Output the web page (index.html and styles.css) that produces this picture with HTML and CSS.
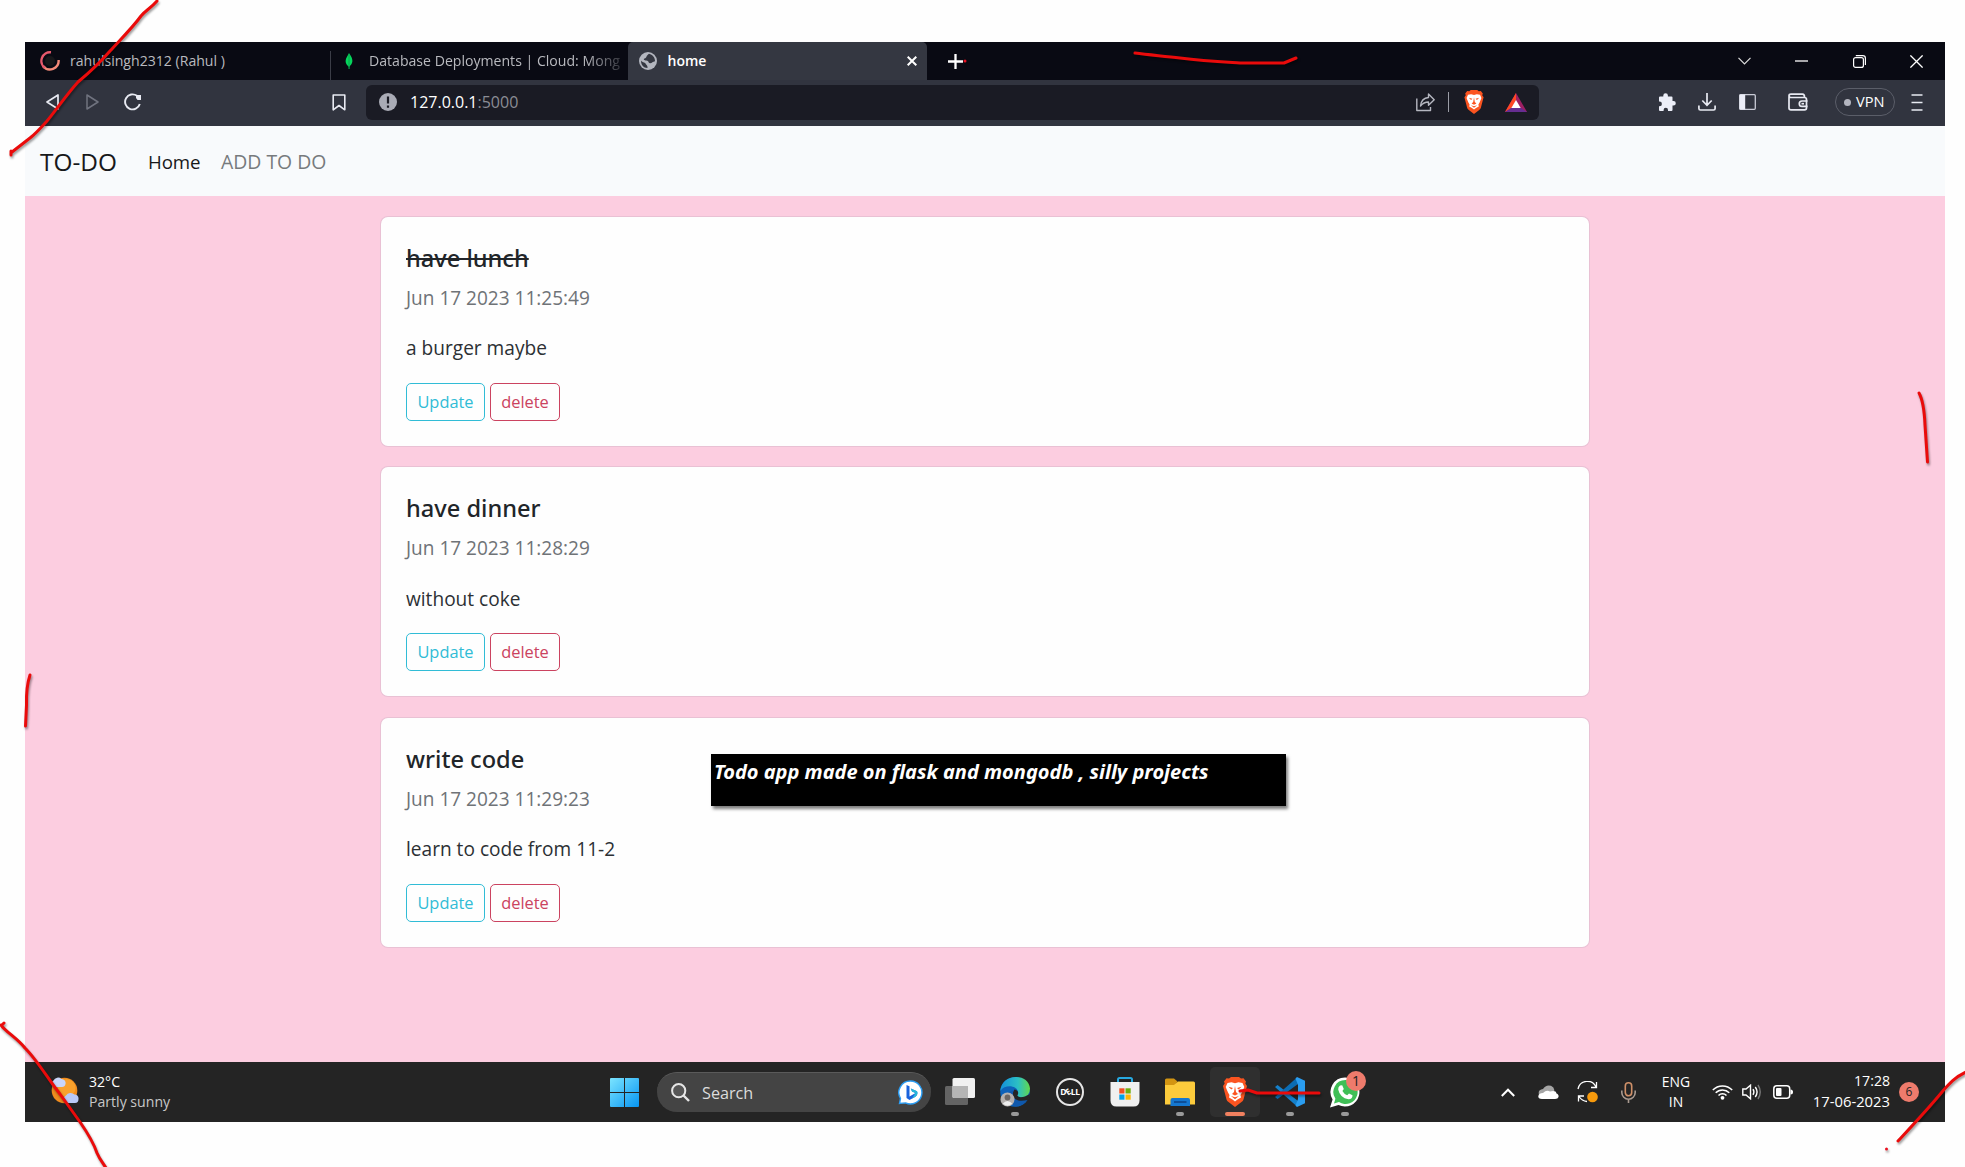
FILE: index.html
```
<!DOCTYPE html>
<html lang="en">
<head>
<meta charset="utf-8">
<title>home</title>
<link rel="stylesheet" href="styles.css">
</head>
<body>
<div class="desktop">
  <header class="tabs">
    <div class="tab tab-first">
      <svg width="20" height="20" viewBox="0 0 20 20" fill="none" stroke-width="2.4"><path d="M18.6 9A8.7 8.7 0 0 1 3 15" stroke="#f58a78"/><path d="M5 17A8.7 8.7 0 0 1 11 1.3" stroke="#e8596c"/><circle cx="10" cy="10" r="5" fill="#17171a"/></svg>
      <span>rahulsingh2312 (Rahul )</span>
    </div>
    <div class="tab tab-second">
      <svg width="8" height="16" viewBox="0 0 8 16"><path d="M4 0C5 2 7.6 4.5 7.4 8.3C7.2 11 5.5 12.5 4.5 13.5V16H3.6V13.5C2 12.5.6 10.5.6 8C.6 4.5 3.2 2.5 4 0Z" fill="#05d65c"/><path d="M4 1V14" stroke="#0a9a4a" stroke-width=".8"/></svg>
      <span class="faded">Database Deployments | Cloud: Mong</span>
    </div>
    <div class="tab tab-active">
      <svg width="18" height="18" viewBox="0 0 18 18"><circle cx="9" cy="9" r="9" fill="#b3b6bf"/><path d="M10 1.8C7 3.5 8 6 5.5 6.5C4 7 5 8.5 7.5 8.6C10 8.8 9 11 11 11.2C13 11.4 13.5 9.5 16 9.2C16.3 6 13.5 2.5 10 1.8ZM2 8.5C3 10.5 5.8 10 6.5 11.5C7 13 8.8 13 8.5 16C4.5 16 1.8 12.5 2 8.5Z" fill="#353842"/></svg>
      <b>home</b>
      <svg class="close" width="10" height="10" viewBox="0 0 10 10" stroke="#fff" stroke-width="2"><path d="M.7.7 9.3 9.3M9.3.7.7 9.3"/></svg>
    </div>
    <svg class="plus" width="15" height="15" viewBox="0 0 15 15" stroke="#fff" stroke-width="2.3"><path d="M7.500 0V15M0 7.500H15"/></svg>
    <div class="window-controls">
      <svg width="13" height="8" viewBox="0 0 13 8" fill="none" stroke="#ddd" stroke-width="1.2"><path d="M.5.8 6.500 7 12.500.8"/></svg>
      <svg width="13" height="2" viewBox="0 0 13 2"><path d="M0 1H13" stroke="#fff" stroke-width="1.3"/></svg>
      <svg width="13" height="13" viewBox="0 0 13 13" fill="none" stroke="#fff" stroke-width="1.2"><rect x=".6" y="2.6" width="9.8" height="9.8" rx="2"/><path d="M2.800.6H9.800Q12.400.6 12.400 3.200V10"/></svg>
      <svg width="13" height="13" viewBox="0 0 13 13" stroke="#fff" stroke-width="1.3"><path d="M.4.4 12.600 12.600M12.600.4.4 12.600"/></svg>
    </div>
  </header>

  <div class="toolbar">
    <svg class="back" width="13" height="16" viewBox="0 0 13 16" fill="none" stroke="#e8eaf2" stroke-width="1.7" stroke-linejoin="round"><path d="M12 1V15L1 8Z"/></svg>
    <svg class="forward" width="13" height="16" viewBox="0 0 13 16" fill="none" stroke="#70737f" stroke-width="1.5" stroke-linejoin="round"><path d="M1 1V15L12 8Z"/></svg>
    <svg class="reload" width="18" height="18" viewBox="0 0 18 18" fill="none" stroke="#e8eaf2" stroke-width="1.9"><path d="M15.800 11A7.500 7.500 0 1 1 13 2.800"/><path d="M12 2H17V7H13.500L12 5Z" fill="#e8eaf2" stroke="none"/></svg>
    <svg class="bookmark" width="14" height="17" viewBox="0 0 14 17" fill="none" stroke="#e8eaf2" stroke-width="1.6" stroke-linejoin="round"><path d="M1.200 1H12.800V15.800L7 11.500 1.200 15.800Z"/></svg>
    <div class="address">
      <svg width="18" height="18" viewBox="0 0 18 18"><circle cx="9" cy="9" r="9" fill="#a9abb5"/><path d="M9 3.500V10.500M9 12.500V14.700" stroke="#1a1b24" stroke-width="2.2"/></svg>
      <span class="url">127.0.0.1<i>:5000</i></span>
      <svg class="share" width="19" height="19" viewBox="0 0 19 19" fill="none" stroke="#b5b7c0" stroke-width="1.4" stroke-linejoin="round"><path d="M.8 5.500V17.500H14.500V14"/><path d="M12.500 1 18.200 6.700 12.500 12.200V9C9 9 6.500 10.500 4.500 13C5 8.500 7.500 4.800 12.500 4.500Z"/></svg>
      <span class="divider"></span>
      <svg class="shield" width="20" height="24" viewBox="0 0 24 30"><use href="#lion"/></svg>
      <svg class="rewards" width="22" height="19" viewBox="0 0 22 19"><path d="M11 0 22 19H0Z" fill="#9e1f63"/><path d="M11 0 0 19 7 14.500 11 7Z" fill="#ff4724"/><path d="M0 19H22L15.500 14.500H7Z" fill="#662d91"/><path d="M11 7 15.700 15H6.300Z" fill="#fff"/></svg>
    </div>
    <svg class="puzzle" width="18" height="18" viewBox="0 0 18 18"><path d="M1 4.500Q1 3.500 2 3.500H5.300V2.500A2.300 2.300 0 0 1 9.900 2.500V3.500H13.500Q14.500 3.500 14.500 4.500V8H15.500A2.300 2.300 0 0 1 15.500 12.600H14.500V17Q14.500 18 13.500 18H10V17A2.200 2.200 0 0 0 5.600 17V18H2Q1 18 1 17V13.200H1.600A2.300 2.300 0 0 0 1.600 8.600H1Z" fill="#eceef8"/></svg>
    <svg class="download" width="18" height="18" viewBox="0 0 18 18" fill="none" stroke="#e8eaf2" stroke-width="1.7"><path d="M9 0V12M4.300 7.500 9 12.300 13.700 7.500M.9 12.500V15.500Q.9 17 2.400 17H15.600Q17.100 17 17.100 15.500V12.500"/></svg>
    <svg class="sidebar" width="17" height="16" viewBox="0 0 17 16"><rect x=".7" y=".7" width="15.6" height="14.6" rx="1" fill="none" stroke="#c9cbd6" stroke-width="1.3"/><path d="M.5.500H6.200V15.500H.5Z" fill="#eceef8"/></svg>
    <svg class="wallet" width="20" height="18" viewBox="0 0 20 18" fill="none" stroke="#e8eaf2" stroke-width="1.7"><path d="M1 3.500V15Q1 16.900 3 16.900H16.500Q18.500 16.900 18.500 15V6.500Q18.500 4.500 16.500 4.500H3Q1 4.500 1 2.700Q1 1.100 3 1.100H14.500Q16.500 1.100 16.500 4"/><path d="M19.500 8H14A2.700 2.700 0 0 0 14 13.400H19.500"/><path d="M13.500 10.700H16"/></svg>
    <div class="vpn"><i></i><span>VPN</span></div>
    <svg class="menu" width="12" height="17" viewBox="0 0 12 17" stroke="#e8eaf2" stroke-width="1.7"><path d="M.5 1H11.500M.5 8.500H11.500M.5 16H11.500"/></svg>
  </div>

  <nav class="navbar">
    <span class="brand">TO-DO</span>
    <span class="nav-home">Home</span>
    <span class="nav-add">ADD TO DO</span>
  </nav>

  <main class="page">
    <article class="card">
      <h5 class="done">have lunch</h5>
      <h6>Jun 17 2023 11:25:49</h6>
      <p>a burger maybe</p>
      <div class="actions"><a class="btn update">Update</a><a class="btn delete">delete</a></div>
    </article>
    <article class="card">
      <h5>have dinner</h5>
      <h6>Jun 17 2023 11:28:29</h6>
      <p>without coke</p>
      <div class="actions"><a class="btn update">Update</a><a class="btn delete">delete</a></div>
    </article>
    <article class="card">
      <h5>write code</h5>
      <h6>Jun 17 2023 11:29:23</h6>
      <p>learn to code from 11-2</p>
      <div class="actions"><a class="btn update">Update</a><a class="btn delete">delete</a></div>
    </article>
  </main>

  <footer class="taskbar">
    <div class="weather">
      <svg width="28" height="28" viewBox="0 0 28 28"><circle cx="13.5" cy="14.5" r="12.8" fill="#f08c1e"/><circle cx="15.5" cy="12" r="9" fill="#f9a12c"/><path d="M3 11A3.500 3.500 0 0 1 2.500 4.500A5 5 0 0 1 10.500 3A4 4 0 0 1 14.500 8Q14 11 11 11Z" fill="#c9d6fa"/><path d="M15.500 27A4 4 0 0 1 15 19.500A5.500 5.500 0 0 1 23.500 18.500A4 4 0 0 1 27.500 23Q27.500 27 24 27Z" fill="#b9c9f8"/></svg>
      <div><b>32°C</b><span>Partly sunny</span></div>
    </div>
    <svg class="start" width="29" height="29" viewBox="0 0 29 29"><defs><linearGradient id="win" x1="0" y1="0" x2="1" y2="1"><stop offset="0" stop-color="#7be4ff"/><stop offset="1" stop-color="#0795f2"/></linearGradient></defs><path d="M1 0H14V14H0V1Q0 0 1 0ZM15 0H28Q29 0 29 1V14H15ZM0 15H14V29H1Q0 29 0 28ZM15 15H29V28Q29 29 28 29H15Z" fill="url(#win)"/></svg>
    <div class="search">
      <svg width="19" height="19" viewBox="0 0 19 19" fill="none" stroke="#e6e6e6" stroke-width="2"><circle cx="7.7" cy="7.7" r="6.6" fill="#565656"/><path d="M12.500 12.500 18 18" stroke-width="2.4"/></svg>
      <span>Search</span>
      <svg class="bing" width="25" height="25" viewBox="0 0 25 25"><path d="M12.500 1A11.500 11.500 0 1 1 7.500 22.900L1.500 23.500 2.500 18.500A11.500 11.500 0 0 1 12.500 1Z" fill="#fff" stroke="#2a9df4" stroke-width="1.4"/><path d="M8.500 5 11.500 6.200V16.500L17.500 13 14 11.500 12.800 8.500 19 11.200Q20.500 14.500 17 17L11.500 20 8.500 18Z" fill="#1a63dc"/><path d="M12.800 8.500 19 11.200Q20.500 14.500 17 17L14 18.500 17.500 13 14 11.500Z" fill="#26b9d8"/></svg>
    </div>
    <div class="apps">
      <div class="app"><svg width="30" height="28" viewBox="0 0 30 28"><rect y="8" width="23" height="19" rx="1.5" fill="#646464"/><rect x="7.5" width="22.5" height="20" rx="1.5" fill="#f1f1f1"/><path d="M7.500 8H23V20H9Q7.500 20 7.500 18.500Z" fill="#b5b5b5"/></svg></div>
      <div class="app open"><svg width="30" height="30" viewBox="0 0 30 30"><defs><linearGradient id="edge" x1="0" x2="1"><stop offset=".1" stop-color="#1797d8"/><stop offset=".6" stop-color="#2cc0c4"/><stop offset="1" stop-color="#62d84c"/></linearGradient></defs><circle cx="15" cy="15" r="14.8" fill="#0d62ba"/><path d="M.2 14C2-4.500 29-4 30 11.500Q30 20 21 20.500C16 20.500 16.500 18 18 16C19 9.500 6 6 .2 14Z" fill="url(#edge)"/><path d="M14.500 12.500C11 17 13 24.500 21 25.500Q25 25.700 28.500 23L30 17 25 19.500Q19 21.500 17.300 18.500 19 16 17.500 14 16 12.300 14.500 12.500Z" fill="#252525"/><path d="M14 13C10 18 14 26.500 27.500 23C22 31.500 9 31 6 21Q7 14 14 13Z" fill="#0f58ac"/><circle cx="7.5" cy="22.5" r="7" fill="#b5b1af"/><circle cx="7.5" cy="20.5" r="2.9" fill="#6b6664"/><path d="M2.800 26.500Q7.500 21.500 12.200 26.500 7.500 31 2.800 26.500Z" fill="#eee"/></svg></div>
      <div class="app dell"><span>D<i>E</i>LL</span></div>
      <div class="app"><svg width="30" height="30" viewBox="0 0 30 30"><path d="M8 8V2.500Q8 1 9.500 1H20.500Q22 1 22 2.500V8" fill="none" stroke="#27a9e1" stroke-width="2"/><path d="M.5 5H29.500V23.500Q29.500 29.500 23.500 29.500H6.500Q.5 29.500.5 23.500Z" fill="#f0f0f0"/><path d="M9.300 11.300H14.500V16.500H9.300Z" fill="#f25022"/><path d="M15.500 11.300H20.700V16.500H15.500Z" fill="#6fae0c"/><path d="M9.300 17.500H14.500V22.700H9.300Z" fill="#00a0e8"/><path d="M15.500 17.500H20.700V22.700H15.500Z" fill="#fbb507"/></svg></div>
      <div class="app open"><svg width="30" height="28" viewBox="0 0 30 28"><path d="M0 2Q0 .5 1.500.5H9L12.500 3.500 10 7H0Z" fill="#d39512"/><path d="M0 7H9L13 3.500H28.500Q30 3.500 30 5V26.500H0Z" fill="#fccb3c"/><path d="M5.500 28V22Q5.500 20 7.500 20H23Q25 20 25 22V28Z" fill="#1577cf"/><path d="M9 24H21.500" stroke="#0d4e97" stroke-width="2"/></svg></div>
      <div class="app open current"><svg width="24" height="30" viewBox="0 0 24 30"><g id="lion"><path d="M6 1.500 8 0H16L18 1.500 20.500 1.300 23 4.500 22.300 6.500 24 9 20.500 22.500Q20 24 18.500 25L12 30 5.500 25Q4 24 3.500 22.500L0 9 1.700 6.500 1 4.500 3.500 1.300Z" fill="#fb5420"/><path d="M4.500 6 8.500 5.200 12 6.300 15.500 5.200 19.500 6 21.300 10 19 15.500 17.500 18 18 20.500 14.500 22.500 12 24.500 9.500 22.500 6 20.500 6.500 18 5 15.500 2.700 10Z" fill="#fff"/><path d="M5.500 9.800 10 11 8.300 12.500ZM18.500 9.800 14 11 15.700 12.500ZM12 9 13 15 15 17 12 18.500 9 17 11 15ZM8 19 12 20.300 16 19 12 22.300Z" fill="#fb5420"/></g></svg></div>
      <div class="app open"><svg width="30" height="30" viewBox="0 0 30 30"><path d="M0 10 2.500 8 23 24 22 29.500Z" fill="#1480cb"/><path d="M0 20 2.500 22 23 7 22 .5Z" fill="#0b6cb3"/><path d="M22 0 30 3.700V26.300L22 30 20.500 28.500 23 22V8L20.500 1.500Z" fill="#2a9df0"/></svg></div>
      <div class="app open whatsapp"><svg width="30" height="31" viewBox="0 0 30 31"><path d="M15.300.5A14.500 14.500 0 1 1 8.500 28L0 30.500 2.600 22.500A14.500 14.500 0 0 1 15.300.5Z" fill="#fff"/><path d="M15.300 3A12 12 0 1 1 9 25L4 26.500 5.400 21.700A12 12 0 0 1 15.300 3Z" fill="#3fbf56"/><path d="M10 8.500 12.200 8.300 13.800 12 12.400 14Q14 17 17.200 18.300L19 16.500 22.500 18.200Q22.500 22 18.500 22.200Q10 21 8.200 12.500Q8 10 10 8.500Z" fill="#fff"/></svg><em>1</em></div>
    </div>
    <div class="tray">
      <svg class="up" width="14" height="9" viewBox="0 0 14 9" fill="none" stroke="#fff" stroke-width="2"><path d="M.8 8 7 1.700 13.200 8"/></svg>
      <svg class="cloud" width="21" height="15" viewBox="0 0 21 15"><path d="M1 10Q-.5 4.500 5 4Q8-.8 13 .8Q16 2 16.500 5.500L7 12Z" fill="#a5a5a5"/><path d="M4 14Q0 14 .3 11Q1 8 5 8Q8.500 4.500 12 6.500Q18 5 18.500 8.500Q21 9.500 20.500 12Q20 14 17 14Z" fill="#fff"/></svg>
      <svg class="sync" width="22" height="22" viewBox="0 0 22 22" fill="none" stroke="#fff" stroke-width="1.3"><path d="M1 8A9.500 9.500 0 0 1 19 6M19.500 1V6.500H14M1.500 20.500V15H7M2 15.500Q5 20 10 20.500"/><circle cx="15.5" cy="16" r="5.3" fill="#f79a0c" stroke="none"/></svg>
      <svg class="mic" width="15" height="21" viewBox="0 0 15 21" fill="none" stroke="#cf9068" stroke-width="1.6"><rect x="4.3" y=".8" width="6.4" height="13" rx="3.2"/><path d="M.8 8.500V10.500A6.700 6.700 0 0 0 14.200 10.500V8.500M7.500 17V21" stroke="#a99a90"/></svg>
      <div class="lang"><span>ENG</span><span>IN</span></div>
      <svg class="wifi" width="21" height="16" viewBox="0 0 21 16" fill="none" stroke="#fff" stroke-width="1.5"><path d="M.8 6A13.500 13.500 0 0 1 20.200 6M3.700 8.800A9.500 9.500 0 0 1 17.300 8.800M6.500 11.500A5.600 5.600 0 0 1 14.500 11.500"/><circle cx="10.5" cy="13.8" r="1.9" fill="#fff" stroke="none"/></svg>
      <svg class="speaker" width="20" height="16" viewBox="0 0 20 16" fill="none" stroke="#fff" stroke-width="1.4"><path d="M.8 5H4L8.500 1.200V14.800L4 11H.8Z"/><path d="M11 5.200Q12.800 8 11 10.800M13.300 3Q16.800 8 13.300 13"/><path d="M16 1Q20.500 8 16 15" stroke="#777"/></svg>
      <svg class="battery" width="20" height="14" viewBox="0 0 20 14"><rect x=".8" y=".8" width="15.9" height="12.4" rx="3" fill="none" stroke="#fff" stroke-width="1.5"/><rect x="3" y="3" width="5.5" height="8" rx="1" fill="#fff"/><path d="M17.500 4.500Q20 4.500 20 7T17.500 9.500Z" fill="#fff"/></svg>
      <div class="clock"><span class="time">17:28</span><span class="date">17-06-2023</span></div>
      <div class="notices">6</div>
    </div>
  </footer>
</div>

<div class="caption">Todo app made on flask and mongodb , silly projects</div>

<svg class="ink" width="1965" height="1167" viewBox="0 0 1965 1167">
  <path d="M157 1C150 9 146 10 141 16C133 27 122 38 110 51C98 65 90 72 78 82C67 94 57 109 47 121C39 130 34 135 30 138L12 152M11 151V155"/>
  <path d="M2 1025 4 1023M1 1025C6 1032 17 1038 25 1048C38 1061 50 1082 60 1094L80 1122C89 1135 94 1144 97 1153C100 1160 103 1163 106 1168"/>
  <path d="M1135 53C1150 55 1164 56 1180 58C1205 61 1225 62 1240 63H1284L1296 58"/>
  <path d="M1919 393Q1924 402 1925 425L1927.500 462"/>
  <path d="M30 675Q26 687 26.500 705L25.500 726"/>
  <path d="M1966 1072C1955 1077 1949 1084 1942 1092C1928 1109 1912 1126 1898 1141"/>
  <path d="M1240 1091 1248 1090 1257 1093H1319"/>
  <g class="dots"><circle cx="965" cy="61" r="1.5"/><circle cx="1886.5" cy="1149" r="1.5"/></g>
</svg>
</body>
</html>
```
FILE: styles.css
```
* { box-sizing: border-box; }

body {
  margin: 0;
  width: 1965px;
  height: 1167px;
  overflow: hidden;
  background: #fefefe;
  font-family: "Open Sans", "Noto Sans", sans-serif;
}

svg { display: block; flex: none; }
i, em { font-style: normal; }

.desktop {
  display: flex;
  flex-direction: column;
  width: 1920px;
  height: 1080px;
  margin: 42px 0 0 25px;
}

/* Tab strip */
.tabs {
  display: flex;
  align-items: center;
  height: 38px;
  background: #090a13;
  color: #b9babf;
  font-size: 14.1px;
  white-space: nowrap;
}
.tab { display: flex; align-items: center; height: 38px; }
.tab span, .tab b { padding-bottom: 2px; }
.tab-first { width: 305px; padding-left: 15px; gap: 10px; }
.tab-second {
  width: 298px;
  padding-left: 15px;
  gap: 16px;
  background: linear-gradient(#3b3d47, #3b3d47) 0 9px / 1px 29px no-repeat;
}
.faded {
  width: 251px;
  overflow: hidden;
  -webkit-mask-image: linear-gradient(90deg, #000 86%, rgba(0, 0, 0, .25));
  mask-image: linear-gradient(90deg, #000 86%, rgba(0, 0, 0, .25));
}
.tab-active {
  width: 299px;
  padding: 0 10px 0 11px;
  background: #343741;
  border-radius: 5px 5px 0 0;
  color: #fff;
}
.tab-active b { margin-left: 10.5px; font-size: 14px; font-weight: 600; }
.close { margin-left: auto; }
.plus { margin-left: 21px; }
.window-controls { display: flex; align-items: center; gap: 44.5px; margin: 0 22px 0 auto; }

/* Toolbar */
.toolbar {
  display: flex;
  align-items: center;
  height: 46px;
  padding: 0 22px 2px 21px;
  background: #31343f;
}
.forward { margin-left: 27px; }
.reload { margin-left: 25px; }
.bookmark { margin-left: 190px; }
.address {
  display: flex;
  align-items: center;
  width: 1173px;
  height: 35px;
  margin: 1px 0 0 20px;
  padding: 0 12px 1px 13px;
  border-radius: 6px;
  background: #1a1b24;
}
.url { margin-left: 13px; color: #fff; font-size: 16px; }
.url i { color: #8b8d95; }
.share { margin-left: auto; }
.divider { width: 1px; height: 20px; margin: 0 15px 0 13px; background: #9b9da6; }
.rewards { margin-left: 21px; }
.puzzle { margin-left: 119px; }
.download { margin-left: 22px; }
.sidebar { margin-left: 23px; }
.wallet { margin-left: 32px; }
.vpn {
  display: flex;
  align-items: center;
  gap: 5px;
  width: 60px;
  height: 28px;
  margin-left: 27px;
  padding-left: 8px;
  border: 1px solid #5b5e69;
  border-radius: 14px;
  color: #fff;
  font-size: 14.6px;
}
.vpn i { width: 7px; height: 7px; border-radius: 50%; background: #b3b5bf; }
.vpn span { padding-bottom: 2px; }
.menu { margin-left: auto; }

/* Application navbar */
.navbar {
  display: flex;
  align-items: center;
  height: 70px;
  padding: 0 0 0 15px;
  background: #f8fafc;
  color: #17181a;
}
.brand { width: 108px; font-size: 24.4px; }
.nav-home { width: 73px; font-size: 18.7px; letter-spacing: -.1px; }
.nav-add { color: #777a7d; font-size: 19.4px; }

/* To-do list */
.page {
  display: flex;
  flex-direction: column;
  align-items: center;
  gap: 21.5px;
  height: 866px;
  padding-top: 20.5px;
  background: #fccde0;
}
.card {
  width: 1208px;
  height: 229px;
  padding: 26px 25px 25px;
  border-radius: 7px;
  background: #fefefe;
  box-shadow: 0 0 0 1px rgba(150, 140, 160, .18);
}
.card h5, .card h6, .card p { margin: 0; line-height: 30px; }
.card h5 { margin-bottom: 10px; color: #212529; font-size: 23.6px; font-weight: 500; font-family: "Noto Sans", "Open Sans", sans-serif; }
.card .done { width: max-content; text-decoration: line-through; text-decoration-thickness: 2px; }
.card h6 { margin-bottom: 20px; color: #6f7377; font-size: 19.05px; font-weight: 400; }
.card p { margin-bottom: 19.5px; padding-top: .5px; color: #2c3034; font-size: 19.1px; }
.actions { display: flex; gap: 5px; }
.btn {
  height: 38px;
  border: 1px solid;
  border-radius: 5px;
  font-size: 16.4px;
  line-height: 36px;
  text-align: center;
}
.update { width: 79px; color: #31bcd6; }
.delete { width: 70px; color: #cb4360; }

/* Taskbar */
.taskbar {
  display: flex;
  align-items: center;
  height: 60px;
  background: #242424;
  color: #fff;
  font-size: 14.1px;
  line-height: 20px;
}
.weather { display: flex; align-items: center; gap: 10px; width: 585px; padding-left: 26px; }
.weather svg { margin-top: -5px; }
.weather b { display: block; font-weight: 400; }
.weather span { display: block; color: #c8c8c8; }
.search {
  display: flex;
  align-items: center;
  width: 274px;
  height: 40px;
  margin-left: 17.5px;
  padding: 0 8px 0 14px;
  border-radius: 20px;
  border-top: 1px solid #5a5a5a;
  background: #444;
}
.search span { margin-left: 12.5px; padding-top: 1px; color: #dcdcdc; font-size: 16.2px; }
.bing { margin-left: auto; }
.apps { display: flex; margin-left: 2px; }
.app {
  position: relative;
  display: flex;
  align-items: center;
  justify-content: center;
  width: 50px;
  height: 50px;
  margin: 0 2.5px;
  border-radius: 5px;
}
.open::after {
  content: "";
  position: absolute;
  bottom: 1px;
  left: 21px;
  width: 8px;
  height: 4px;
  border-radius: 2px;
  background: #9a9a9a;
}
.current { background: #2f2f2f; }
.current::after { left: 15px; width: 20px; background: #f0805f; }
.dell span {
  width: 28px;
  height: 28px;
  border: 2px solid #e6e6e6;
  border-radius: 50%;
  font-size: 8.5px;
  font-weight: 700;
  line-height: 24px;
  letter-spacing: -.3px;
  text-align: center;
}
.dell i { display: inline-block; transform: rotate(-35deg); }
.whatsapp em {
  position: absolute;
  top: 4px;
  right: 4px;
  width: 20px;
  height: 20px;
  border-radius: 50%;
  background: #ee7b6c;
  color: #222;
  font-size: 14px;
  text-align: center;
}
.tray { display: flex; align-items: center; margin-left: 128.5px; }
.cloud { margin-left: 23px; }
.sync { margin-left: 18px; }
.mic { margin-left: 22px; }
.lang { display: flex; flex-direction: column; align-items: center; width: 28px; margin-left: 26px; font-size: 13.9px; }
.wifi { margin-left: 22px; }
.speaker { margin-left: 9px; }
.battery { margin-left: 11px; }
.clock { display: flex; flex-direction: column; align-items: flex-end; width: 80px; margin-left: 17px; margin-top: -2px; }
.date { font-size: 14.8px; }
.notices {
  width: 20px;
  height: 20px;
  margin-left: 9px;
  border-radius: 50%;
  background: #ee7b6c;
  color: #222;
  font-size: 12px;
  text-align: center;
}

/* Annotations laid over the screen */
.caption {
  position: absolute;
  left: 711px;
  top: 754px;
  width: 575px;
  height: 52px;
  padding: 4px 0 0 3px;
  background: #000;
  box-shadow: 2px 3px 3px rgba(0, 0, 0, .5);
  color: #fff;
  font: italic 700 20px/27px "Noto Sans", "Open Sans", sans-serif;
  white-space: nowrap;
}
.ink {
  position: absolute;
  left: 0;
  top: 0;
  fill: none;
  stroke: #ea0b0b;
  stroke-width: 3;
  stroke-linecap: round;
  stroke-linejoin: round;
  filter: drop-shadow(1.5px 2px 1px rgba(0, 0, 0, .4));
  pointer-events: none;
}
.dots { fill: #ea1020; stroke: none; }
```
